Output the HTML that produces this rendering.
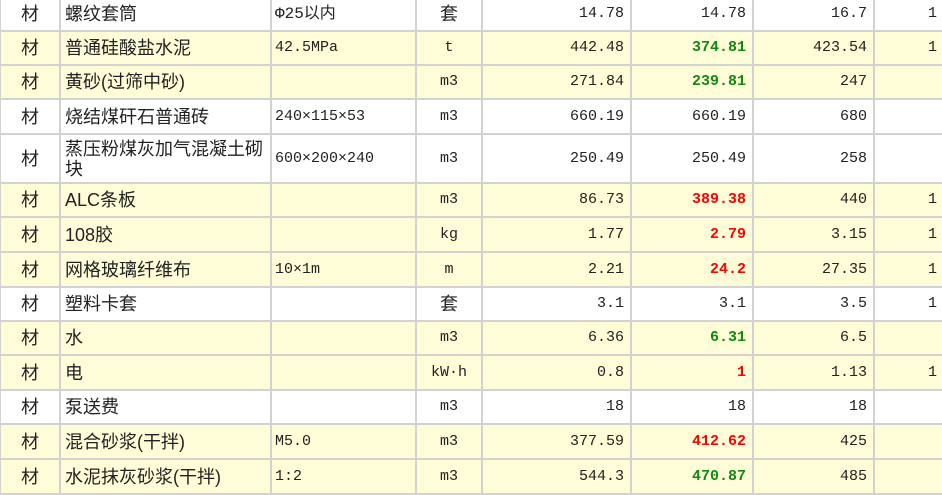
<!DOCTYPE html>
<html><head><meta charset="utf-8"><style>
body{margin:0;width:942px;height:476px;overflow:hidden;background:#fff;position:relative}
table{position:absolute;left:-1px;top:-5px;border-collapse:collapse;table-layout:fixed;width:944px}
td{border:2px solid #d2d2d2;padding:0 4px;font-family:"Liberation Sans","Noto Sans CJK SC",sans-serif;font-size:18px;color:#222;overflow:hidden;white-space:nowrap;line-height:20px}
td.c{text-align:center}
td.n{text-align:right;font-family:"Liberation Mono","Noto Sans CJK SC",monospace;font-size:15px;padding-right:6px}
td.s{font-family:"Liberation Mono","Noto Sans CJK SC",monospace;font-size:15px;padding-left:3px}
td.u{text-align:center;font-family:"Liberation Mono","Noto Sans CJK SC",monospace;font-size:15px}
td.w{white-space:normal;line-height:20px}
tr.y td{background:#fffcd8}
.g{color:#118a11;font-weight:bold}
.r{color:#ff0000;font-weight:bold}
</style></head><body>
<table>
<colgroup><col style="width:60px"><col style="width:211px"><col style="width:145px"><col style="width:66px"><col style="width:149px"><col style="width:122px"><col style="width:121px"><col style="width:70px"></colgroup>
<tr style="height:35px"><td class="c">材</td><td>螺纹套筒</td><td class="s" style="font-size:16px">Φ25以内</td><td class="c">套</td><td class="n">14.78</td><td class="n">14.78</td><td class="n">16.7</td><td class="n">1</td></tr>
<tr class="y" style="height:34px"><td class="c">材</td><td>普通硅酸盐水泥</td><td class="s">42.5MPa</td><td class="u">t</td><td class="n">442.48</td><td class="n g">374.81</td><td class="n">423.54</td><td class="n">1</td></tr>
<tr class="y" style="height:34px"><td class="c">材</td><td>黄砂(过筛中砂)</td><td class="s"></td><td class="u">m3</td><td class="n">271.84</td><td class="n g">239.81</td><td class="n">247</td><td class="n"></td></tr>
<tr style="height:35px"><td class="c">材</td><td>烧结煤矸石普通砖</td><td class="s">240×115×53</td><td class="u">m3</td><td class="n">660.19</td><td class="n">660.19</td><td class="n">680</td><td class="n"></td></tr>
<tr style="height:49px"><td class="c">材</td><td class="w">蒸压粉煤灰加气混凝土砌块</td><td class="s">600×200×240</td><td class="u">m3</td><td class="n">250.49</td><td class="n">250.49</td><td class="n">258</td><td class="n"></td></tr>
<tr class="y" style="height:34px"><td class="c">材</td><td>ALC条板</td><td class="s"></td><td class="u">m3</td><td class="n">86.73</td><td class="n r">389.38</td><td class="n">440</td><td class="n">1</td></tr>
<tr class="y" style="height:35px"><td class="c">材</td><td>108胶</td><td class="s"></td><td class="u">kg</td><td class="n">1.77</td><td class="n r">2.79</td><td class="n">3.15</td><td class="n">1</td></tr>
<tr class="y" style="height:35px"><td class="c">材</td><td>网格玻璃纤维布</td><td class="s">10×1m</td><td class="u">m</td><td class="n">2.21</td><td class="n r">24.2</td><td class="n">27.35</td><td class="n">1</td></tr>
<tr style="height:34px"><td class="c">材</td><td>塑料卡套</td><td class="s"></td><td class="c">套</td><td class="n">3.1</td><td class="n">3.1</td><td class="n">3.5</td><td class="n">1</td></tr>
<tr class="y" style="height:34px"><td class="c">材</td><td>水</td><td class="s"></td><td class="u">m3</td><td class="n">6.36</td><td class="n g">6.31</td><td class="n">6.5</td><td class="n"></td></tr>
<tr class="y" style="height:35px"><td class="c">材</td><td>电</td><td class="s"></td><td class="u">kW·h</td><td class="n">0.8</td><td class="n r">1</td><td class="n">1.13</td><td class="n">1</td></tr>
<tr style="height:34px"><td class="c">材</td><td>泵送费</td><td class="s"></td><td class="u">m3</td><td class="n">18</td><td class="n">18</td><td class="n">18</td><td class="n"></td></tr>
<tr class="y" style="height:35px"><td class="c">材</td><td>混合砂浆(干拌)</td><td class="s">M5.0</td><td class="u">m3</td><td class="n">377.59</td><td class="n r">412.62</td><td class="n">425</td><td class="n"></td></tr>
<tr class="y" style="height:35px"><td class="c">材</td><td>水泥抹灰砂浆(干拌)</td><td class="s">1:2</td><td class="u">m3</td><td class="n">544.3</td><td class="n g">470.87</td><td class="n">485</td><td class="n"></td></tr>
</table>
</body></html>
